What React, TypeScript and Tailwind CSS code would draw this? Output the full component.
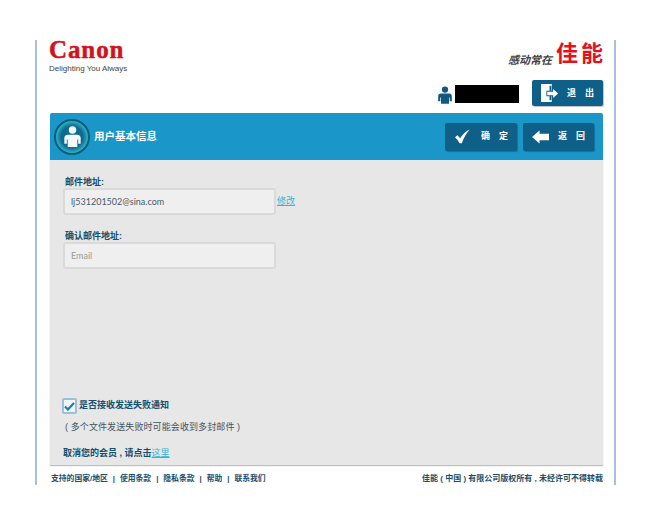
import type { ReactNode } from "react";

const cjk = "font-['Liberation_Sans','Noto_Sans_CJK_SC',sans-serif]";

function PersonIcon({ className }: { className?: string }) {
  return (
    <svg viewBox="0 0 16 20" className={className} fill="currentColor">
      <circle cx="8" cy="3.800" r="3.600" />
      <path d="M3.200 8.400h9.600c1.700 0 3 1.300 3 3V17h-2.400v-4.200h-.8V20H3.400v-7.200h-.8V17H.2v-5.600c0-1.700 1.300-3 3-3z" />
    </svg>
  );
}

function CheckIcon() {
  return (
    <svg viewBox="0 0 18 17" className="h-[17px] w-[18px]" fill="#fff">
      <path d="M0 9.500 3 7l3.200 3.600C8.800 6.400 12 2.800 17.600 0c-3.800 4.400-7.200 10-9.400 16.600H5.600C4 13.800 2.200 11.400 0 9.500z" />
    </svg>
  );
}

function ArrowIcon() {
  return (
    <svg viewBox="0 0 18 14" className="h-[14px] w-[18px]" fill="#fff">
      <path d="M0 7 8 0v3.600h10v6.800H8V14z" />
    </svg>
  );
}

function DoorIcon() {
  return (
    <svg viewBox="0 0 20 20" className="h-[20px] w-[20px]">
      <rect x="0" y="0" width="12" height="20" fill="#fff" />
      <rect x="9.500" y="2" width="2" height="16" fill="#0f6089" />
      <path d="M6 7.500h6.500V3.500L20 10.500l-7.500 7v-4H6z" fill="#0f6089" />
      <path d="M7 8.500h6.500V5.500L19 10.500l-5.500 5v-3H7z" fill="#fff" />
    </svg>
  );
}

function DarkButton({ icon, label, className }: { icon: ReactNode; label: string; className: string }) {
  return (
    <div className={`flex items-center rounded-[2px] bg-[#0f6089] text-white shadow-[1px_1px_1px_rgba(0,0,0,0.25)] ${className}`}>
      {icon}
      <span className="text-[9px] leading-none font-bold tracking-[9px] whitespace-nowrap">{label}</span>
    </div>
  );
}

function FormInput({ value, muted }: { value: string; muted?: boolean }) {
  return (
    <div
      className={`flex h-[27px] w-[213px] items-center rounded-[3px] border-2 border-[#dadada] bg-[#efefef] pl-[6px] font-['Lato',sans-serif] text-[9px] ${
        muted ? "text-[#999]" : "text-[#4a5a66]"
      }`}
    >
      {value}
    </div>
  );
}

export default function App() {
  return (
    <div className={`h-[525px] w-[652px] bg-white pt-[40px] pl-[35px] ${cjk}`}>
      <div className="flex h-[445px] w-[581px] flex-col border-x-2 border-[#a9c0dc] pr-[11px] pl-[13px]">
        {/* header */}
        <div className="flex h-[40px] shrink-0 justify-between">
          <div className="-ml-[1px] w-[90px]">
            <div className="h-[24px] font-['Liberation_Serif',serif] text-[25px] leading-[19px] font-bold tracking-[0.9px] text-[#d2121d] [-webkit-text-stroke:0.5px_#d2121d]">
              Canon
            </div>
            <div className="text-[8px] leading-[10px] whitespace-nowrap text-[#444]">Delighting You Always</div>
          </div>
          <div className="flex h-[26px] items-end gap-[4px] pt-[2px]">
            <span className="font-['Noto_Sans_CJK_SC',serif] text-[11px] leading-[14px] font-bold text-[#444] italic">感动常在</span>
            <span className="-mr-[3px] text-[22px] leading-[24px] font-bold tracking-[3px] text-[#e60f20]">佳能</span>
          </div>
        </div>

        {/* user row */}
        <div className="mb-[7px] flex h-[26px] shrink-0 items-center justify-end">
          <PersonIcon className="mt-[4px] h-[18px] w-[14px] text-[#12597f]" />
          <div className="mt-[1px] ml-[3px] h-[18px] w-[64px] bg-black" />
          <DarkButton
            className="ml-[13px] h-[26px] w-[71px] gap-[8px] pl-[9px]"
            icon={<DoorIcon />}
            label="退出"
          />
        </div>

        {/* title bar */}
        <div className="flex h-[47px] shrink-0 items-center rounded-t-[2px] bg-[#1a96c9] pr-[9px] pl-[4px]">
          <div className="flex h-[36px] w-[36px] items-center justify-center rounded-full border-2 border-[#0c5f7c] bg-[radial-gradient(circle,#0f6a90_48%,#45d6e0_82%)]">
            <PersonIcon className="h-[21px] w-[17px] text-[#f2f7fa]" />
          </div>
          <h1 className="ml-[4px] flex-1 text-[10.5px] font-bold text-white">用户基本信息</h1>
          <div className="flex gap-[6px]">
            <DarkButton className="h-[28px] w-[72px] gap-[11px] pl-[10px]" icon={<CheckIcon />} label="确定" />
            <DarkButton className="h-[28px] w-[71px] gap-[9px] pl-[9px]" icon={<ArrowIcon />} label="返回" />
          </div>
        </div>

        {/* form */}
        <div className="flex h-[305px] shrink-0 flex-col bg-[#e7e7e7] pl-[13px] shadow-[0_1px_1px_rgba(0,0,0,0.25)]">
          <label className="mt-[16px] h-[12px] pl-[2px] text-[9px] leading-[12px] font-bold text-[#134f6e]">邮件地址:</label>
          <div className="flex items-center">
            <FormInput value="lj531201502@sina.com" />
            <a className="ml-[1px] text-[9px] text-[#35b4d6] underline decoration-[#35b4d6]">修改</a>
          </div>
          <label className="mt-[15px] h-[12px] pl-[2px] text-[9px] leading-[12px] font-bold text-[#134f6e]">确认邮件地址:</label>
          <FormInput value="Email" muted />

          <div className="mt-auto -ml-[1px] flex h-[16px] items-center">
            <div className="flex h-[16px] w-[15px] items-center justify-center rounded-[2px] border-2 border-[#9cc0d8] bg-[#f2f5f7]">
              <svg viewBox="0 0 12 10" className="h-[9px] w-[11px]" fill="none" stroke="#1b7fb0" strokeWidth="2.400">
                <path d="M1 5l3.200 3.400L11 1" />
              </svg>
            </div>
            <span className="ml-[2px] text-[9px] font-bold text-[#134f6e]">是否接收发送失败通知</span>
          </div>
          <p className="mt-[7px] pl-[2px] text-[9px] leading-[12px] tracking-[0.1px] text-[#3f5563]">( 多个文件发送失败时可能会收到多封邮件 )</p>
          <p className="mt-[14px] mb-[6px] text-[9px] leading-[12px] font-bold text-[#134f6e]">
            取消您的会员 , 请点击<a className="font-normal text-[#35b4d6] underline">这里</a>
          </p>
        </div>

        {/* footer */}
        <div className="flex flex-1 items-end justify-between pl-[1px] text-[7.8px] leading-[12px] font-bold text-[#1c4d6a]">
          <div className="flex gap-[5px] whitespace-nowrap">
            <span>支持的国家/地区</span>
            <span>|</span>
            <span>使用条款</span>
            <span>|</span>
            <span>隐私条款</span>
            <span>|</span>
            <span>帮助</span>
            <span>|</span>
            <span>联系我们</span>
          </div>
          <span className="text-[8px] whitespace-nowrap">佳能 ( 中国 ) 有限公司版权所有 , 未经许可不得转载</span>
        </div>
      </div>
    </div>
  );
}
